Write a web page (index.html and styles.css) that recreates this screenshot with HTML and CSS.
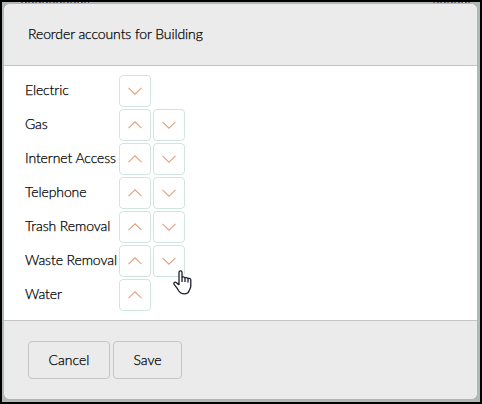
FILE: index.html
```html
<!DOCTYPE html>
<html lang="en">

<head>
    <meta charset="UTF-8" />
    <meta name="viewport" content="width=device-width, initial-scale=1.0" />
    <title>Reorder accounts</title>
    <link rel="stylesheet" href="styles.css">
</head>

<body>
    <svg class="icon-defs">
        <symbol id="up" viewBox="0 0 14 8"><path d="M.5 7.2 7 .8l6.500 6.400" /></symbol>
        <symbol id="down" viewBox="0 0 14 8"><path d="M.5.8 7 7.200 13.500.8" /></symbol>
    </svg>
    <div class="modal">
        <div class="modal-header">Reorder accounts for Building</div>
        <div class="modal-body">
            <div class="row">
                <span class="label">Electric</span>
                <button class="move"><svg><use href="#down" /></svg></button>
            </div>
            <div class="row">
                <span class="label">Gas</span>
                <button class="move"><svg><use href="#up" /></svg></button>
                <button class="move"><svg><use href="#down" /></svg></button>
            </div>
            <div class="row">
                <span class="label">Internet Access</span>
                <button class="move"><svg><use href="#up" /></svg></button>
                <button class="move"><svg><use href="#down" /></svg></button>
            </div>
            <div class="row">
                <span class="label">Telephone</span>
                <button class="move"><svg><use href="#up" /></svg></button>
                <button class="move"><svg><use href="#down" /></svg></button>
            </div>
            <div class="row">
                <span class="label">Trash Removal</span>
                <button class="move"><svg><use href="#up" /></svg></button>
                <button class="move"><svg><use href="#down" /></svg></button>
            </div>
            <div class="row">
                <span class="label">Waste Removal</span>
                <button class="move"><svg><use href="#up" /></svg></button>
                <button class="move">
                    <svg><use href="#down" /></svg>
                    <svg class="pointer" viewBox="0 0 19 25">
                        <path d="M6 15V2.500C6 .4 9 .4 9 2.500V8c0-1.500 3-1.500 3 .5 0-1.300 3-1.300 3 .6 0-1.200 2.800-1.200 2.800.8V16c0 2-1 3.500-1.600 4.500C15.500 22.800 14 23.800 11.500 23.800c-3 0-4.700-1-6-3.300-1-2-2.300-3.500-4-5.500C-.2 12.500 2 11.500 3.500 12.700L6 15M9 8v4M12 8.500V12M15 9v3.500" />
                    </svg>
                </button>
            </div>
            <div class="row">
                <span class="label">Water</span>
                <button class="move"><svg><use href="#up" /></svg></button>
            </div>
        </div>
        <div class="modal-footer">
            <button class="btn cancel">Cancel</button>
            <button class="btn save">Save</button>
        </div>
    </div>
</body>

</html>
```
FILE: styles.css
```css
* {
    box-sizing: border-box;
}

html,
body {
    height: 100%;
    margin: 0;
}

body {
    padding: 2px 3px 3px 2px;
    border: 2px solid #000;
    background-color: #b0b8b6;
    overflow: hidden;
    font: 300 14px/20px Lato, "Liberation Sans", sans-serif;
    letter-spacing: -.1px;
    color: #000;
    -webkit-text-stroke: .25px #000;
}

/* page text cut off behind the modal */
body::before,
body::after {
    content: "";
    position: absolute;
    top: 2px;
    left: 21px;
    width: 68px;
    height: 1px;
    background: repeating-linear-gradient(90deg, #8b6a50 0 2px, #b0b8b6 2px 4px, #4a6495 4px 6px, #b0b8b6 6px 7px);
}

body::after {
    left: 433px;
    width: 39px;
}

.icon-defs {
    display: none;
}

.modal {
    display: flex;
    flex-direction: column;
    height: 100%;
    border-radius: 6px;
    background-color: #fff;
    overflow: hidden;
}

.modal-header {
    height: 62px;
    padding: 20px 24px;
    border-bottom: 1px solid #c4c4c4;
    background-color: #ebebeb;
}

.modal-body {
    flex: 1;
    display: flex;
    flex-direction: column;
    gap: 2px;
    padding: 9px 21px 0;
}

.row {
    display: flex;
    gap: 2px;
}

.label {
    width: 92px;
    padding-top: 5px;
    white-space: nowrap;
}

.move {
    position: relative;
    display: flex;
    align-items: center;
    justify-content: center;
    width: 32px;
    height: 32px;
    padding: 0;
    border: 1px solid #d0e4e1;
    border-radius: 4px;
    background-color: #fff;
}

.move svg {
    width: 14px;
    height: 8px;
    fill: none;
    stroke: #e3a27c;
    stroke-width: 1.1;
}

.move .pointer {
    position: absolute;
    left: 19px;
    top: 24px;
    width: 19px;
    height: 25px;
    fill: #fff;
    stroke: #1c1c2c;
    stroke-width: 1.3;
    stroke-linejoin: round;
}

.modal-footer {
    display: flex;
    gap: 3px;
    height: 79px;
    padding: 20px 24px;
    border-top: 1px solid #c4c4c4;
    background-color: #ebebeb;
}

.btn {
    height: 38px;
    padding: 0;
    border: 1px solid #c4c4c4;
    border-radius: 4px;
    background-color: #ebebeb;
    font: inherit;
    color: inherit;
}

.cancel {
    width: 82px;
}

.save {
    width: 69px;
}
```
